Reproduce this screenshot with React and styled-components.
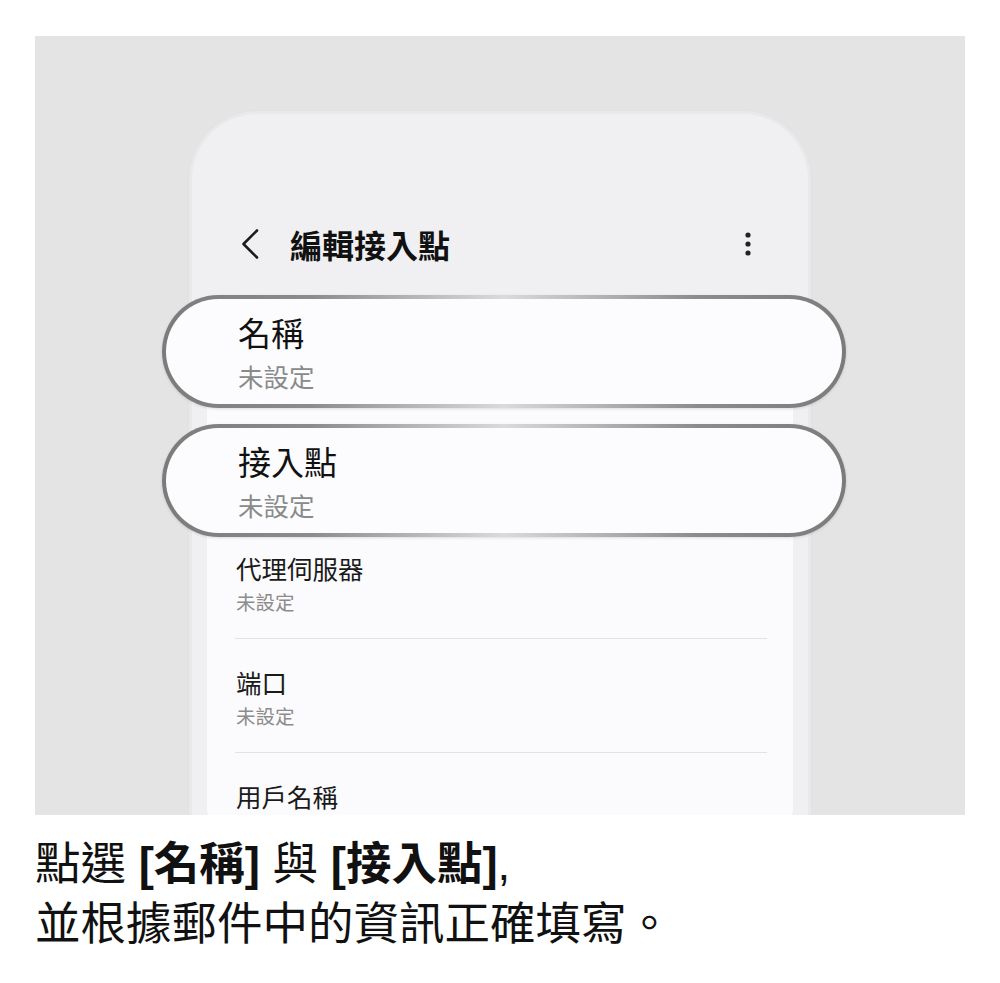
import React from 'react';
import styled, { createGlobalStyle } from 'styled-components';

const GlobalStyle = createGlobalStyle`
  html, body {
    margin: 0;
    padding: 0;
    background: #ffffff;
  }
  body {
    font-family: "Noto Sans CJK TC", "Noto Sans", sans-serif;
    color: #111;
  }
`

const Page = styled.div`
  width: 1000px;
  height: 983px;
  padding: 36px 35px 0;
  box-sizing: border-box;
`

const Stage = styled.div`
  height: 779px;
  background: #e4e4e4;
  overflow: hidden;
  display: flex;
  justify-content: center;
  padding-top: 78px;
  box-sizing: border-box;
`

const Phone = styled.div`
  width: 616px;
  height: 760px;
  flex-shrink: 0;
  background: #f0f0f2;
  border-radius: 66px 66px 0 0;
  box-shadow: 0 0 0 3px #e9e9eb, 0 0 6px rgba(0, 0, 0, 0.06);
  padding: 102px 15px 0;
  box-sizing: border-box;
  display: flex;
  flex-direction: column;
`

const Header = styled.div`
  height: 56px;
  display: flex;
  align-items: center;
  padding: 0 42px 0 34px;
`

const BackButton = styled.div`
  width: 18px;
  height: 30px;
  display: flex;
  align-items: center;
  margin-right: 31px;
`

const Title = styled.h1`
  flex: 1;
  margin: 0;
  font-size: 32px;
  font-weight: 700;
  color: #111;
`

const Card = styled.div`
  margin-top: 23px;
  background: #fbfbfd;
  border-radius: 26px;
  display: flex;
  flex-direction: column;
`

const Pill = styled.div`
  margin: ${p => (p.$last ? '0 -53px -12px -45px' : '0 -53px 16px -45px')};
  height: 113px;
  box-sizing: border-box;
  border: 4px solid transparent;
  border-radius: 60px;
  background:
    linear-gradient(#fcfcfe, #fcfcfe) padding-box,
    linear-gradient(90deg, #7b7b7b 0%, #8c8c8c 22%, #dadada 50%, #8c8c8c 78%, #7b7b7b 100%) border-box;
  box-shadow: 0 1px 3px rgba(0, 0, 0, 0.12);
  padding: 13px 0 0 72px;
  display: flex;
  flex-direction: column;
  position: relative;
  z-index: 1;
`

const PillLabel = styled.div`
  font-size: 33px;
  line-height: 40px;
  color: #111;
`

const PillValue = styled.div`
  margin-top: 8px;
  font-size: 25.5px;
  line-height: 32px;
  color: #8a8a8a;
`

const Row = styled.div`
  margin: 0 26px 0 28px;
  padding: 27px 0 22px 1px;
  border-bottom: ${p => (p.$divider ? '1px solid #e2e2e4' : 'none')};
`

const RowLabel = styled.div`
  font-size: 25.5px;
  line-height: 32px;
  color: #1a1a1a;
`

const RowValue = styled.div`
  margin-top: 4px;
  font-size: 19.5px;
  line-height: 28px;
  color: #8c8c8c;
`

const Caption = styled.p`
  margin: 20px 0 0;
  font-family: "Liberation Sans", "Noto Sans CJK TC", sans-serif;
  font-size: 45.5px;
  line-height: 60px;
  color: #111;
`

const Strong = styled.b`
  font-weight: 700;
`

const ChevronLeft = () => (
  <svg width="18" height="30" viewBox="0 0 18 30" fill="none">
    <polyline points="16,1.5 2.5,15 16,28.5" stroke="#1c1c1c" strokeWidth="2.6" strokeLinecap="round" strokeLinejoin="round" />
  </svg>
)

const MoreIcon = () => (
  <svg width="6" height="24" viewBox="0 0 6 24">
    <circle cx="3" cy="3" r="2.6" fill="#222" />
    <circle cx="3" cy="12" r="2.6" fill="#222" />
    <circle cx="3" cy="21" r="2.6" fill="#222" />
  </svg>
)

// the last row runs off the bottom of the screen, so only its label shows
const rows = [
  { label: '代理伺服器', value: '未設定', divider: true },
  { label: '端口', value: '未設定', divider: true },
  { label: '用戶名稱', divider: false },
]

const App = () => {
  return (
    <Page>
      <GlobalStyle />
      <Stage>
        <Phone>
          <Header>
            <BackButton><ChevronLeft /></BackButton>
            <Title>編輯接入點</Title>
            <MoreIcon />
          </Header>

          <Card>
            <Pill>
              <PillLabel>名稱</PillLabel>
              <PillValue>未設定</PillValue>
            </Pill>
            <Pill $last>
              <PillLabel>接入點</PillLabel>
              <PillValue>未設定</PillValue>
            </Pill>

            {rows.map(r => (
              <Row key={r.label} $divider={r.divider}>
                <RowLabel>{r.label}</RowLabel>
                {r.value && <RowValue>{r.value}</RowValue>}
              </Row>
            ))}
          </Card>
        </Phone>
      </Stage>

      <Caption>
        點選 <Strong>[名稱]</Strong> 與 <Strong>[接入點]</Strong>,
        <br />
        並根據郵件中的資訊正確填寫。
      </Caption>
    </Page>
  )
}

export default App
